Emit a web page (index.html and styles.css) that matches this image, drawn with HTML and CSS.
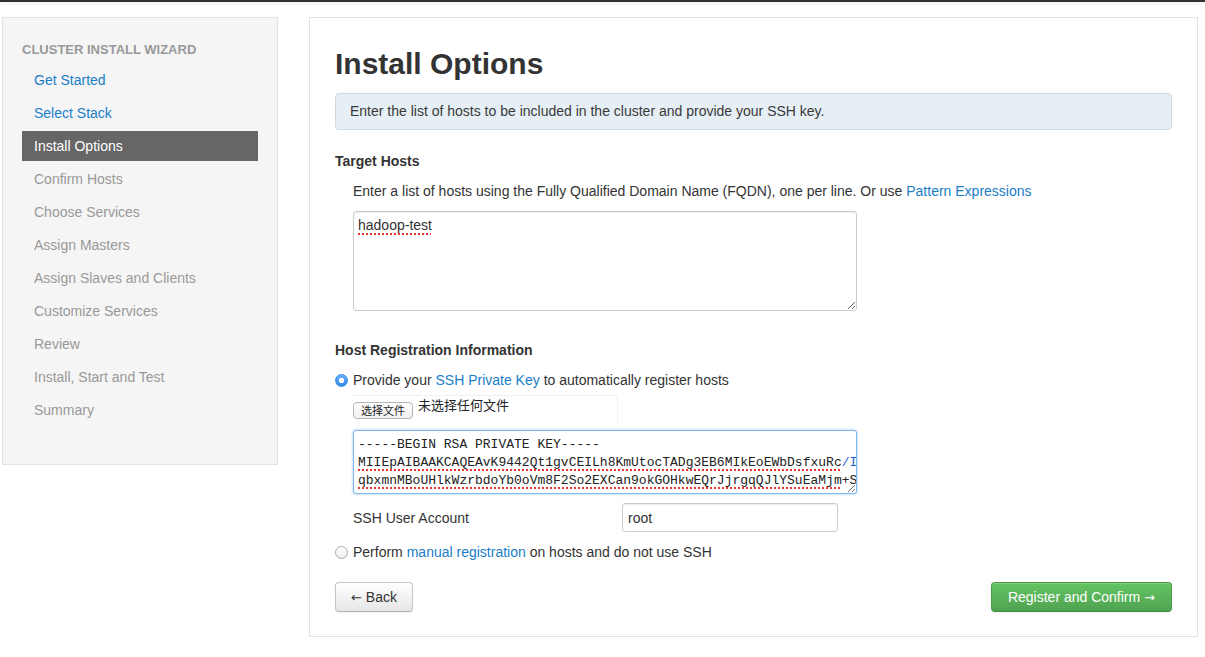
FILE: index.html
```html
<!DOCTYPE html>
<html>
<head>
<meta charset="utf-8">
<link rel="stylesheet" href="styles.css">
</head>
<body>
<div class="topbar"></div>
<div class="page">
  <aside class="sidebar">
    <div class="nav-header">CLUSTER INSTALL WIZARD</div>
    <ul class="nav">
      <li><a class="link">Get Started</a></li>
      <li><a class="link">Select Stack</a></li>
      <li class="active"><a>Install Options</a></li>
      <li><a class="disabled">Confirm Hosts</a></li>
      <li><a class="disabled">Choose Services</a></li>
      <li><a class="disabled">Assign Masters</a></li>
      <li><a class="disabled">Assign Slaves and Clients</a></li>
      <li><a class="disabled">Customize Services</a></li>
      <li><a class="disabled">Review</a></li>
      <li><a class="disabled">Install, Start and Test</a></li>
      <li><a class="disabled">Summary</a></li>
    </ul>
  </aside>
  <main class="main">
    <h2 class="title">Install Options</h2>
    <div class="alert">Enter the list of hosts to be included in the cluster and provide your SSH key.</div>

    <h5 class="section">Target Hosts</h5>
    <div class="indent">
      <p class="desc">Enter a list of hosts using the Fully Qualified Domain Name (FQDN), one per line. Or use <a class="link">Pattern Expressions</a></p>
      <div class="textarea hosts"><span class="spell">hadoop-test</span></div>
    </div>

    <h5 class="section reg">Host Registration Information</h5>
    <div class="radio-row">
      <span class="radio checked"></span>
      <span>Provide your <a class="link">SSH Private Key</a> to automatically register hosts</span>
    </div>
    <div class="indent">
      <div class="file-box">
        <span class="file-btn">选择文件</span>
        <span class="file-text">未选择任何文件</span>
      </div>
      <div class="textarea key">
        <div class="kl">-----BEGIN RSA PRIVATE KEY-----</div>
        <div class="kl"><span class="spell">MIIEpAIBAAKCAQEAvK9442Qt1gvCEILh8KmUtocTADg3EB6MIkEoEWbDsfxuRc</span><span class="caret">/I</span></div>
        <div class="kl"><span class="spell">qbxmnMBoUHlkWzrbdoYb0oVm8F2So2EXCan9okGOHkwEQrJjrgqQJlYSuEaMjm</span>+S</div>
        <div class="kl">pQ0Xo8y4rGmV7BqU2kLxT1hC9dJnW5sZaE3fYtR6uM0vN8bKcIgHjOpLwQeAzD</div>
      </div>
      <div class="user-row">
        <span class="user-label">SSH User Account</span>
        <div class="input">root</div>
      </div>
    </div>
    <div class="radio-row second">
      <span class="radio"></span>
      <span>Perform <a class="link">manual registration</a> on hosts and do not use SSH</span>
    </div>

    <div class="actions">
      <button class="btn"><span class="arrow">&larr;</span> Back</button>
      <button class="btn btn-success">Register and Confirm <span class="arrow">&rarr;</span></button>
    </div>
  </main>
</div>
</body>
</html>
```

FILE: styles.css
```css
* { box-sizing: border-box; }
html, body { margin: 0; padding: 0; background: #fff; }
body {
  font-family: "Liberation Sans", Arial, "Noto Sans CJK SC", sans-serif;
  font-size: 14px;
  color: #333;
  line-height: 20px;
}
.topbar {
  height: 2px;
  background: #333;
  box-shadow: 0 1px 4px rgba(0,0,0,0.12);
}
.page {
  display: flex;
  align-items: flex-start;
  gap: 31px;
  padding: 15px 0 0 2px;
}
.sidebar {
  width: 276px;
  height: 448px;
  background: #f5f5f5;
  border: 1px solid #e3e3e3;
  padding: 22px 19px 0 19px;
}
.nav-header {
  font-size: 13px;
  font-weight: bold;
  color: #999;
  line-height: 20px;
  text-transform: uppercase;
  margin-bottom: 5px;
}
.nav { list-style: none; margin: 0; padding: 0; display: flex; flex-direction: column; gap: 3px; }
.nav li a {
  display: block;
  height: 30px;
  line-height: 30px;
  padding-left: 12px;
  font-size: 14px;
}
.nav .link { color: #1a7dc8; }
.nav .disabled { color: #999; }
.nav .active a { background: #666; color: #fff; }
.main {
  width: 889px;
  height: 620px;
  border: 1px solid #e3e3e3;
  padding: 25px 25px 0 25px;
}
.title {
  margin: 0;
  font-size: 30px;
  font-weight: bold;
  line-height: 42px;
  color: #333;
  margin-bottom: 8px;
}
.alert {
  background: #e5eff5;
  border: 1px solid #d0dbe1;
  border-radius: 4px;
  padding: 7px 14px 8px;
  color: #3a3a3a;
}
.section {
  margin: 21px 0 0 0;
  font-size: 14px;
  font-weight: bold;
  line-height: 20px;
}
.section.reg { margin-top: 29px; }
.indent { padding-left: 18px; }
.desc { margin: 10px 0 10px 0; }
.link { color: #1a7dc8; text-decoration: none; }
.textarea {
  border: 1px solid #ccc;
  border-radius: 3px;
  box-shadow: inset 0 1px 1px rgba(0,0,0,0.075);
  overflow: hidden;
  resize: both;
  background: #fff;
}
.hosts {
  width: 504px;
  height: 100px;
  padding: 3px 4px;
}
.spell {
  text-decoration: underline dotted #e33;
  text-underline-offset: 3px;
  text-decoration-thickness: 1.5px;
}
.radio-row {
  display: flex;
  align-items: center;
  gap: 5px;
  margin-top: 10px;
  height: 20px;
}
.radio {
  display: inline-block;
  width: 13px;
  height: 13px;
  border-radius: 50%;
  border: 1px solid #aaa;
  background: linear-gradient(#fff, #f0f0f0);
  flex: none;
}
.radio.checked {
  border-color: #3a8ee6;
  background: radial-gradient(circle, #fff 0 2.4px, transparent 3px), linear-gradient(#69b1fa, #2f86ea);
}
.file-box {
  margin-top: 5px;
  width: 265px;
  height: 30px;
  border: 1px solid #f0f0f0;
  border-left: none;
  border-bottom: none;
  display: flex;
  align-items: flex-start;
  padding-top: 6px;
}
.file-btn {
  display: inline-block;
  height: 17px;
  line-height: 15px;
  padding: 0 7px;
  font-size: 11px;
  border: 1px solid #b5b5b5;
  border-radius: 4px;
  background: linear-gradient(#fff, #f1f1f1);
  color: #222;
  font-family: "Noto Sans CJK SC", sans-serif;
}
.file-text {
  margin-left: 5px;
  margin-top: -6px;
  font-size: 13px;
  color: #222;
  font-family: "Noto Sans CJK SC", sans-serif;
  line-height: 18px;
}
.key {
  margin-top: 5px;
  width: 504px;
  height: 64px;
  border-color: #7fb5eb;
  box-shadow: 0 0 3px rgba(82,168,236,0.6);
  font-family: "Liberation Mono", "Courier New", monospace;
  font-size: 13px;
  line-height: 18px;
  padding: 5px 4px 4px;
  color: #222;
}
.kl { white-space: nowrap; }
.caret { color: #1a5fc8; }
.user-row {
  display: flex;
  align-items: center;
  margin-top: 9px;
  height: 29px;
}
.user-label { width: 269px; }
.input {
  width: 216px;
  height: 29px;
  border: 1px solid #ccc;
  border-radius: 3px;
  box-shadow: inset 0 1px 1px rgba(0,0,0,0.075);
  padding: 4px 5px;
  line-height: 20px;
}
.radio-row.second { margin-top: 10px; }
.actions {
  display: flex;
  justify-content: space-between;
  margin-top: 20px;
}
.btn {
  height: 30px;
  padding: 0 15px 0 15px;
  font-family: "Liberation Sans", Arial, sans-serif;
  font-size: 14px;
  color: #333;
  border: 1px solid #c6c6c6;
  border-bottom-color: #b3b3b3;
  border-radius: 4px;
  background: linear-gradient(#fff, #e6e6e6);
  box-shadow: inset 0 1px 0 rgba(255,255,255,0.2), 0 1px 2px rgba(0,0,0,0.05);
}
.arrow { font-family: "DejaVu Sans", sans-serif; font-size: 13px; }
.btn-success {
  color: #fff;
  background: linear-gradient(#62c462, #51a351);
  border-color: #4a9a4a #4a9a4a #3f8a3f;
  padding: 0 16px;
}
```
